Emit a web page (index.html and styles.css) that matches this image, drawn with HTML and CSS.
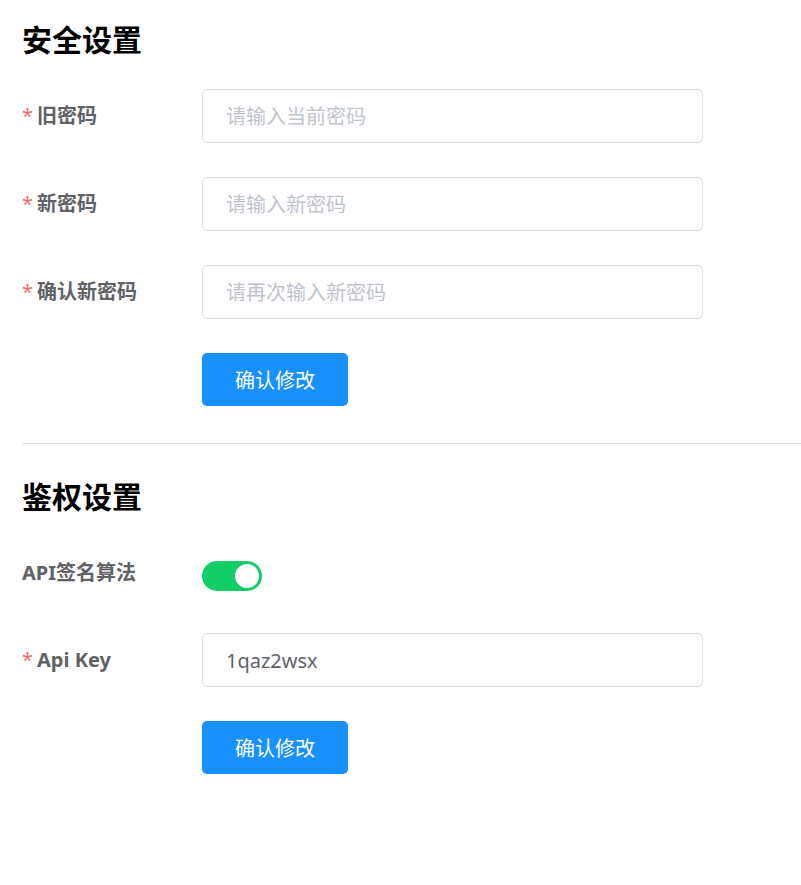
FILE: index.html
```html
<!DOCTYPE html>
<html lang="zh-CN">
<head>
    <meta charset="UTF-8">
    <meta name="viewport" content="width=device-width, initial-scale=1.0">
    <title>设置</title>
    <link rel="stylesheet" href="styles.css">
</head>
<body>
    <main class="settings">
        <section class="panel">
            <h2 class="panel-title">安全设置</h2>

            <div class="form-row">
                <label class="form-label required" for="old-pwd">旧密码</label>
                <input class="form-input" type="password" id="old-pwd" placeholder="请输入当前密码">
            </div>
            <div class="form-row">
                <label class="form-label required" for="new-pwd">新密码</label>
                <input class="form-input" type="password" id="new-pwd" placeholder="请输入新密码">
            </div>
            <div class="form-row">
                <label class="form-label required" for="confirm-pwd">确认新密码</label>
                <input class="form-input" type="password" id="confirm-pwd" placeholder="请再次输入新密码">
            </div>
            <div class="form-row">
                <span class="form-label"></span>
                <button class="btn-primary" type="button">确认修改</button>
            </div>
        </section>

        <hr class="divider">

        <section class="panel">
            <h2 class="panel-title">鉴权设置</h2>

            <div class="form-row switch-row">
                <span class="form-label">API签名算法</span>
                <span class="switch is-on"><span class="switch-knob"></span></span>
            </div>
            <div class="form-row">
                <label class="form-label required" for="api-key">Api Key</label>
                <input class="form-input" type="text" id="api-key" value="1qaz2wsx">
            </div>
            <div class="form-row">
                <span class="form-label"></span>
                <button class="btn-primary" type="button">确认修改</button>
            </div>
        </section>
    </main>
</body>
</html>
```

FILE: styles.css
```css
body {
    margin: 0;
    padding: 0;
    background-color: #fff;
    font-family: "Noto Sans", "Noto Sans CJK SC", sans-serif;
    color: #606266;
}

.settings {
    padding: 20px 0 0 22px;
}

.panel-title {
    margin: 0 0 29px;
    font-size: 30px;
    line-height: 40px;
    font-weight: bold;
    color: #000;
}

.form-row {
    display: flex;
    align-items: center;
    margin-bottom: 34px;
}

.form-label {
    width: 180px;
    flex-shrink: 0;
    font-size: 20px;
    font-weight: bold;
    line-height: 54px;
    color: #606266;
}

    .form-label.required::before {
        content: "*";
        color: #f56c6c;
        margin-right: 4px;
        font-weight: normal;
    }

.form-input {
    box-sizing: border-box;
    width: 501px;
    height: 54px;
    padding: 0 23px;
    font-family: inherit;
    font-size: 20px;
    color: #606266;
    border: 1px solid #dcdfe6;
    border-radius: 5px;
    outline: none;
}

    .form-input::placeholder {
        color: #c0c4cc;
    }

.btn-primary {
    width: 146px;
    height: 53px;
    font-family: inherit;
    font-size: 20px;
    color: #fff;
    background-color: #1890ff;
    border: none;
    border-radius: 5px;
    cursor: pointer;
}

.divider {
    margin: 37px 0 33px;
    border: none;
    border-top: 1px solid #e0e0e8;
}

.switch-row {
    align-items: flex-start;
    margin-bottom: 33px;
}

.switch {
    position: relative;
    display: inline-block;
    width: 60px;
    height: 30px;
    margin-top: 15px;
    border-radius: 15px;
    background-color: #dcdfe6;
}

    .switch.is-on {
        background-color: #13ce66;
    }

.switch-knob {
    position: absolute;
    top: 3px;
    left: 3px;
    width: 24px;
    height: 24px;
    border-radius: 50%;
    background-color: #fff;
}

.switch.is-on .switch-knob {
    left: 33px;
}
```
